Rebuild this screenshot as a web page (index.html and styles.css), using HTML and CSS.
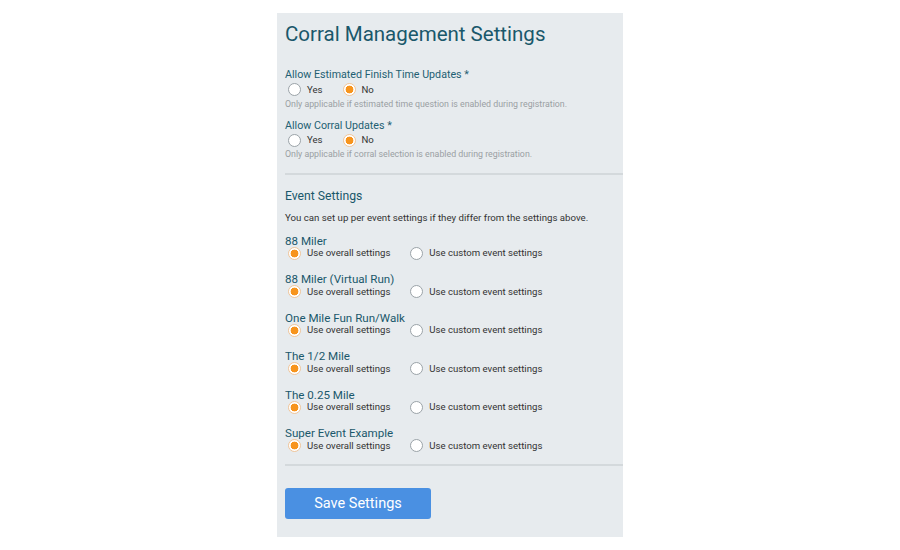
FILE: index.html
```html
<!DOCTYPE html>
<html lang="en">
<head>
    <meta charset="UTF-8">
    <meta name="viewport" content="width=device-width, initial-scale=1.0">
    <title>Corral Management Settings</title>
    <link rel="stylesheet" href="styles.css">
</head>
<body>
    <div class="panel">
        <h1>Corral Management Settings</h1>

        <form>
            <div class="form-group first">
                <label class="field-label">Allow Estimated Finish Time Updates *</label>
                <div class="radio-row">
                    <label class="option"><input type="radio" name="finish" value="1"> Yes</label>
                    <label class="option"><input type="radio" name="finish" value="0" checked> No</label>
                </div>
                <p class="help">Only applicable if estimated time question is enabled during registration.</p>
            </div>

            <div class="form-group">
                <label class="field-label">Allow Corral Updates *</label>
                <div class="radio-row">
                    <label class="option"><input type="radio" name="corral" value="1"> Yes</label>
                    <label class="option"><input type="radio" name="corral" value="0" checked> No</label>
                </div>
                <p class="help">Only applicable if corral selection is enabled during registration.</p>
            </div>

            <hr>

            <h3>Event Settings</h3>
            <p class="intro">You can set up per event settings if they differ from the settings above.</p>

            <div class="events">
                <div class="event">
                    <div class="event-name">88 Miler</div>
                    <div class="radio-row">
                        <label class="option"><input type="radio" name="ev1" checked> Use overall settings</label>
                        <label class="option"><input type="radio" name="ev1"> Use custom event settings</label>
                    </div>
                </div>
                <div class="event">
                    <div class="event-name">88 Miler (Virtual Run)</div>
                    <div class="radio-row">
                        <label class="option"><input type="radio" name="ev2" checked> Use overall settings</label>
                        <label class="option"><input type="radio" name="ev2"> Use custom event settings</label>
                    </div>
                </div>
                <div class="event">
                    <div class="event-name">One Mile Fun Run/Walk</div>
                    <div class="radio-row">
                        <label class="option"><input type="radio" name="ev3" checked> Use overall settings</label>
                        <label class="option"><input type="radio" name="ev3"> Use custom event settings</label>
                    </div>
                </div>
                <div class="event">
                    <div class="event-name">The 1/2 Mile</div>
                    <div class="radio-row">
                        <label class="option"><input type="radio" name="ev4" checked> Use overall settings</label>
                        <label class="option"><input type="radio" name="ev4"> Use custom event settings</label>
                    </div>
                </div>
                <div class="event">
                    <div class="event-name">The 0.25 Mile</div>
                    <div class="radio-row">
                        <label class="option"><input type="radio" name="ev5" checked> Use overall settings</label>
                        <label class="option"><input type="radio" name="ev5"> Use custom event settings</label>
                    </div>
                </div>
                <div class="event">
                    <div class="event-name">Super Event Example</div>
                    <div class="radio-row">
                        <label class="option"><input type="radio" name="ev6" checked> Use overall settings</label>
                        <label class="option"><input type="radio" name="ev6"> Use custom event settings</label>
                    </div>
                </div>
            </div>

            <hr class="bottom">

            <button type="submit">Save Settings</button>
        </form>
    </div>
</body>
</html>
```

FILE: styles.css
```css
body {
    font-family: 'Roboto', 'Liberation Sans', sans-serif;
    margin: 0;
    padding: 0;
    background-color: #fff;
    color: #333;
}

.panel {
    width: 346px;
    box-sizing: border-box;
    margin: 13px auto 0;
    padding: 8px 0 18px 8px;
    background-color: #e7ebee;
}

h1 {
    margin: 0;
    font-size: 20.5px;
    line-height: 26px;
    font-weight: 400;
    color: #1a586b;
}

.form-group {
    margin-top: 9px;
}

.form-group.first {
    margin-top: 21px;
}

.field-label {
    display: block;
    font-size: 10.7px;
    line-height: 14px;
    color: #235f72;
}

.radio-row {
    display: flex;
    align-items: center;
    font-size: 9.6px;
    line-height: 14px;
    color: #333;
}

.form-group .radio-row {
    margin-top: 0.5px;
}

.option {
    display: flex;
    align-items: center;
    margin-right: 17px;
}

input[type="radio"] {
    appearance: none;
    -webkit-appearance: none;
    width: 13px;
    height: 13px;
    margin: 0 6px 0 3px;
    border: 1px solid #9ba3a8;
    border-radius: 50%;
    background-color: #fff;
    box-sizing: border-box;
}

input[type="radio"]:checked {
    border-color: #f0c59a;
    background: radial-gradient(circle, #f7941d 0 3.6px, #fff 4.2px);
}

.help {
    margin: 1px 0 0;
    font-size: 8.8px;
    line-height: 12px;
    color: #9a9fa3;
}

hr {
    margin: 12.5px 0 0;
    border: none;
    height: 2px;
    background-color: #d4d9dc;
}

h3 {
    margin: 13px 0 0;
    font-size: 12.2px;
    line-height: 16px;
    font-weight: 400;
    color: #1a586b;
}

.intro {
    margin: 7px 0 0;
    font-size: 9.7px;
    line-height: 14px;
    color: #333;
}

.events {
    margin-top: 10px;
}

.event + .event {
    margin-top: 13.5px;
}

.event-name {
    font-size: 11.6px;
    line-height: 12px;
    color: #1a586b;
}

.event .radio-row {
    line-height: 12px;
}

hr.bottom {
    margin-top: 12px;
}

button {
    margin-top: 22px;
    width: 146px;
    height: 31px;
    padding: 0;
    font-family: inherit;
    font-size: 14.5px;
    color: #fff;
    background-color: #4a90e2;
    border: none;
    border-radius: 3px;
    cursor: pointer;
}
```
